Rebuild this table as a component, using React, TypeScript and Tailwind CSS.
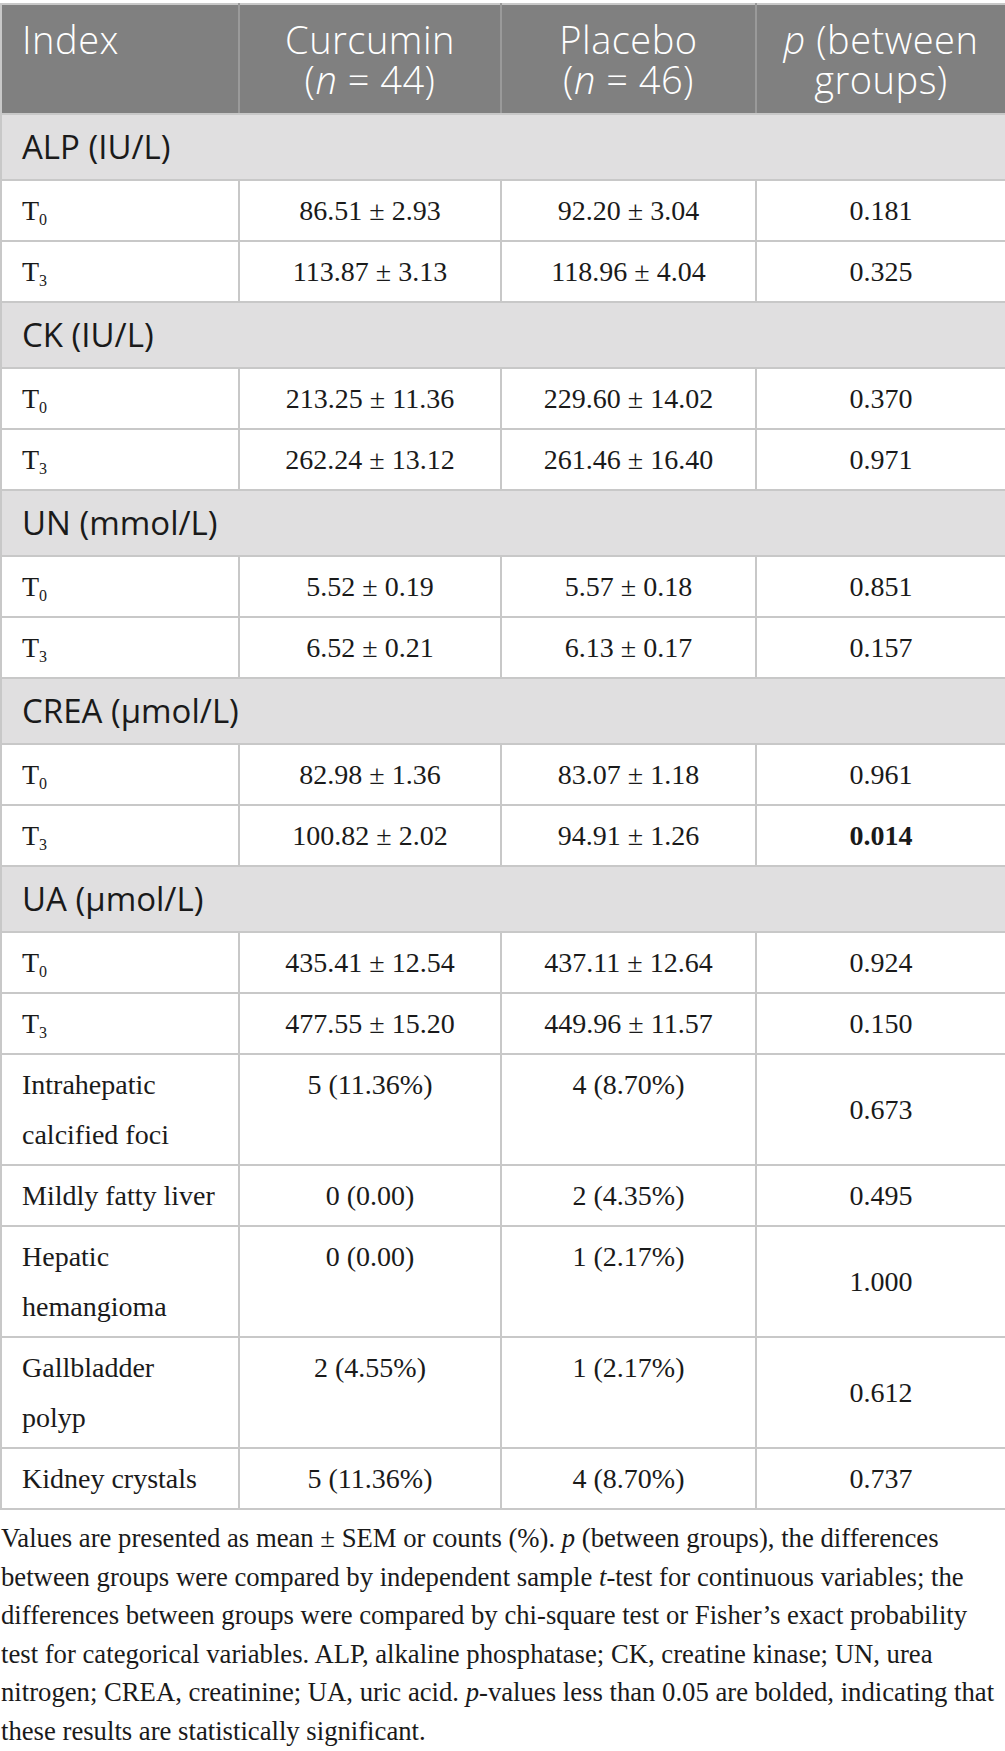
const serif = "font-['Liberation_Serif','Times_New_Roman',serif]";
const sans = "font-['Open_Sans','Noto_Sans',sans-serif]";

type DataRow = {
  label: React.ReactNode;
  a: string;
  b: string;
  p: string;
  bold?: boolean;
};

function T({ n }: { n: string }) {
  return (
    <>
      T<sub className="text-[16px] align-baseline relative top-[5px]">{n}</sub>
    </>
  );
}

const groups: { title: string; rows: DataRow[] }[] = [
  {
    title: "ALP (IU/L)",
    rows: [
      { label: <T n="0" />, a: "86.51 ± 2.93", b: "92.20 ± 3.04", p: "0.181" },
      { label: <T n="3" />, a: "113.87 ± 3.13", b: "118.96 ± 4.04", p: "0.325" },
    ],
  },
  {
    title: "CK (IU/L)",
    rows: [
      { label: <T n="0" />, a: "213.25 ± 11.36", b: "229.60 ± 14.02", p: "0.370" },
      { label: <T n="3" />, a: "262.24 ± 13.12", b: "261.46 ± 16.40", p: "0.971" },
    ],
  },
  {
    title: "UN (mmol/L)",
    rows: [
      { label: <T n="0" />, a: "5.52 ± 0.19", b: "5.57 ± 0.18", p: "0.851" },
      { label: <T n="3" />, a: "6.52 ± 0.21", b: "6.13 ± 0.17", p: "0.157" },
    ],
  },
  {
    title: "CREA (µmol/L)",
    rows: [
      { label: <T n="0" />, a: "82.98 ± 1.36", b: "83.07 ± 1.18", p: "0.961" },
      { label: <T n="3" />, a: "100.82 ± 2.02", b: "94.91 ± 1.26", p: "0.014", bold: true },
    ],
  },
  {
    title: "UA (µmol/L)",
    rows: [
      { label: <T n="0" />, a: "435.41 ± 12.54", b: "437.11 ± 12.64", p: "0.924" },
      { label: <T n="3" />, a: "477.55 ± 15.20", b: "449.96 ± 11.57", p: "0.150" },
    ],
  },
];

const findings: DataRow[] = [
  { label: "Intrahepatic calcified foci", a: "5 (11.36%)", b: "4 (8.70%)", p: "0.673" },
  { label: "Mildly fatty liver", a: "0 (0.00)", b: "2 (4.35%)", p: "0.495" },
  { label: "Hepatic hemangioma", a: "0 (0.00)", b: "1 (2.17%)", p: "1.000" },
  { label: "Gallbladder polyp", a: "2 (4.55%)", b: "1 (2.17%)", p: "0.612" },
  { label: "Kidney crystals", a: "5 (11.36%)", b: "4 (8.70%)", p: "0.737" },
];

const td = "border-2 border-[#c8c8c8] py-[4.5px] align-top";

function Row({ r }: { r: DataRow }) {
  return (
    <tr className={`${serif} text-[28px] leading-[50px] text-[#1a1a1a]`}>
      <td className={`${td} pl-5 pr-5 text-left`}>{r.label}</td>
      <td className={`${td} text-center`}>{r.a}</td>
      <td className={`${td} text-center`}>{r.b}</td>
      <td className={`border-2 border-[#c8c8c8] py-[4.5px] text-center align-middle ${r.bold ? "font-bold" : ""}`}>
        {r.p}
      </td>
    </tr>
  );
}

export default function App() {
  return (
    <div className="w-[1005px] bg-white pt-[3px]">
      <table className="w-[1005px] table-fixed border-collapse border-2 border-[#c8c8c8]">
        <colgroup>
          <col className="w-[238px]" />
          <col className="w-[262px]" />
          <col className="w-[255px]" />
          <col className="w-[250px]" />
        </colgroup>
        <thead>
          <tr className={`${sans} bg-[#808080] text-[38px] font-light leading-[40px] tracking-[0.5px] text-white`}>
            <th className="border-2 border-[#c8c8c8] border-r-[#9a9a9a] px-5 py-[14px] text-left align-top font-light">
              Index
            </th>
            <th className="border-2 border-[#c8c8c8] border-x-[#9a9a9a] py-[14px] text-center align-top font-light">
              Curcumin
              <br />(<i>n</i> = 44)
            </th>
            <th className="border-2 border-[#c8c8c8] border-x-[#9a9a9a] py-[14px] text-center align-top font-light">
              Placebo
              <br />(<i>n</i> = 46)
            </th>
            <th className="border-2 border-[#c8c8c8] border-l-[#9a9a9a] py-[14px] text-center align-top font-light">
              <i>p</i> (between
              <br />groups)
            </th>
          </tr>
        </thead>
        <tbody>
          {groups.map((g) => (
            <GroupRows key={g.title} title={g.title} rows={g.rows} />
          ))}
          {findings.map((r) => (
            <Row key={String(r.label)} r={r} />
          ))}
        </tbody>
      </table>
      <p className={`${serif} mt-[9px] pl-[1px] text-[26.7px] leading-[38.5px] text-[#1a1a1a]`}>
        Values are presented as mean ± SEM or counts (%). <i>p</i> (between groups), the differences
        between groups were compared by independent sample <i>t</i>-test for continuous variables; the
        differences between groups were compared by chi-square test or Fisher’s exact probability
        test for categorical variables. ALP, alkaline phosphatase; CK, creatine kinase; UN, urea
        nitrogen; CREA, creatinine; UA, uric acid. <i>p</i>-values less than 0.05 are bolded, indicating that
        these results are statistically significant.
      </p>
    </div>
  );
}

function GroupRows({ title, rows }: { title: string; rows: DataRow[] }) {
  return (
    <>
      <tr className="bg-[#e0dfe0]">
        <td
          colSpan={4}
          className={`${sans} border-2 border-[#c8c8c8] px-5 py-[7px] text-left text-[33px] leading-[50px] text-[#1a1a1a]`}
        >
          {title}
        </td>
      </tr>
      {rows.map((r, i) => (
        <Row key={i} r={r} />
      ))}
    </>
  );
}
